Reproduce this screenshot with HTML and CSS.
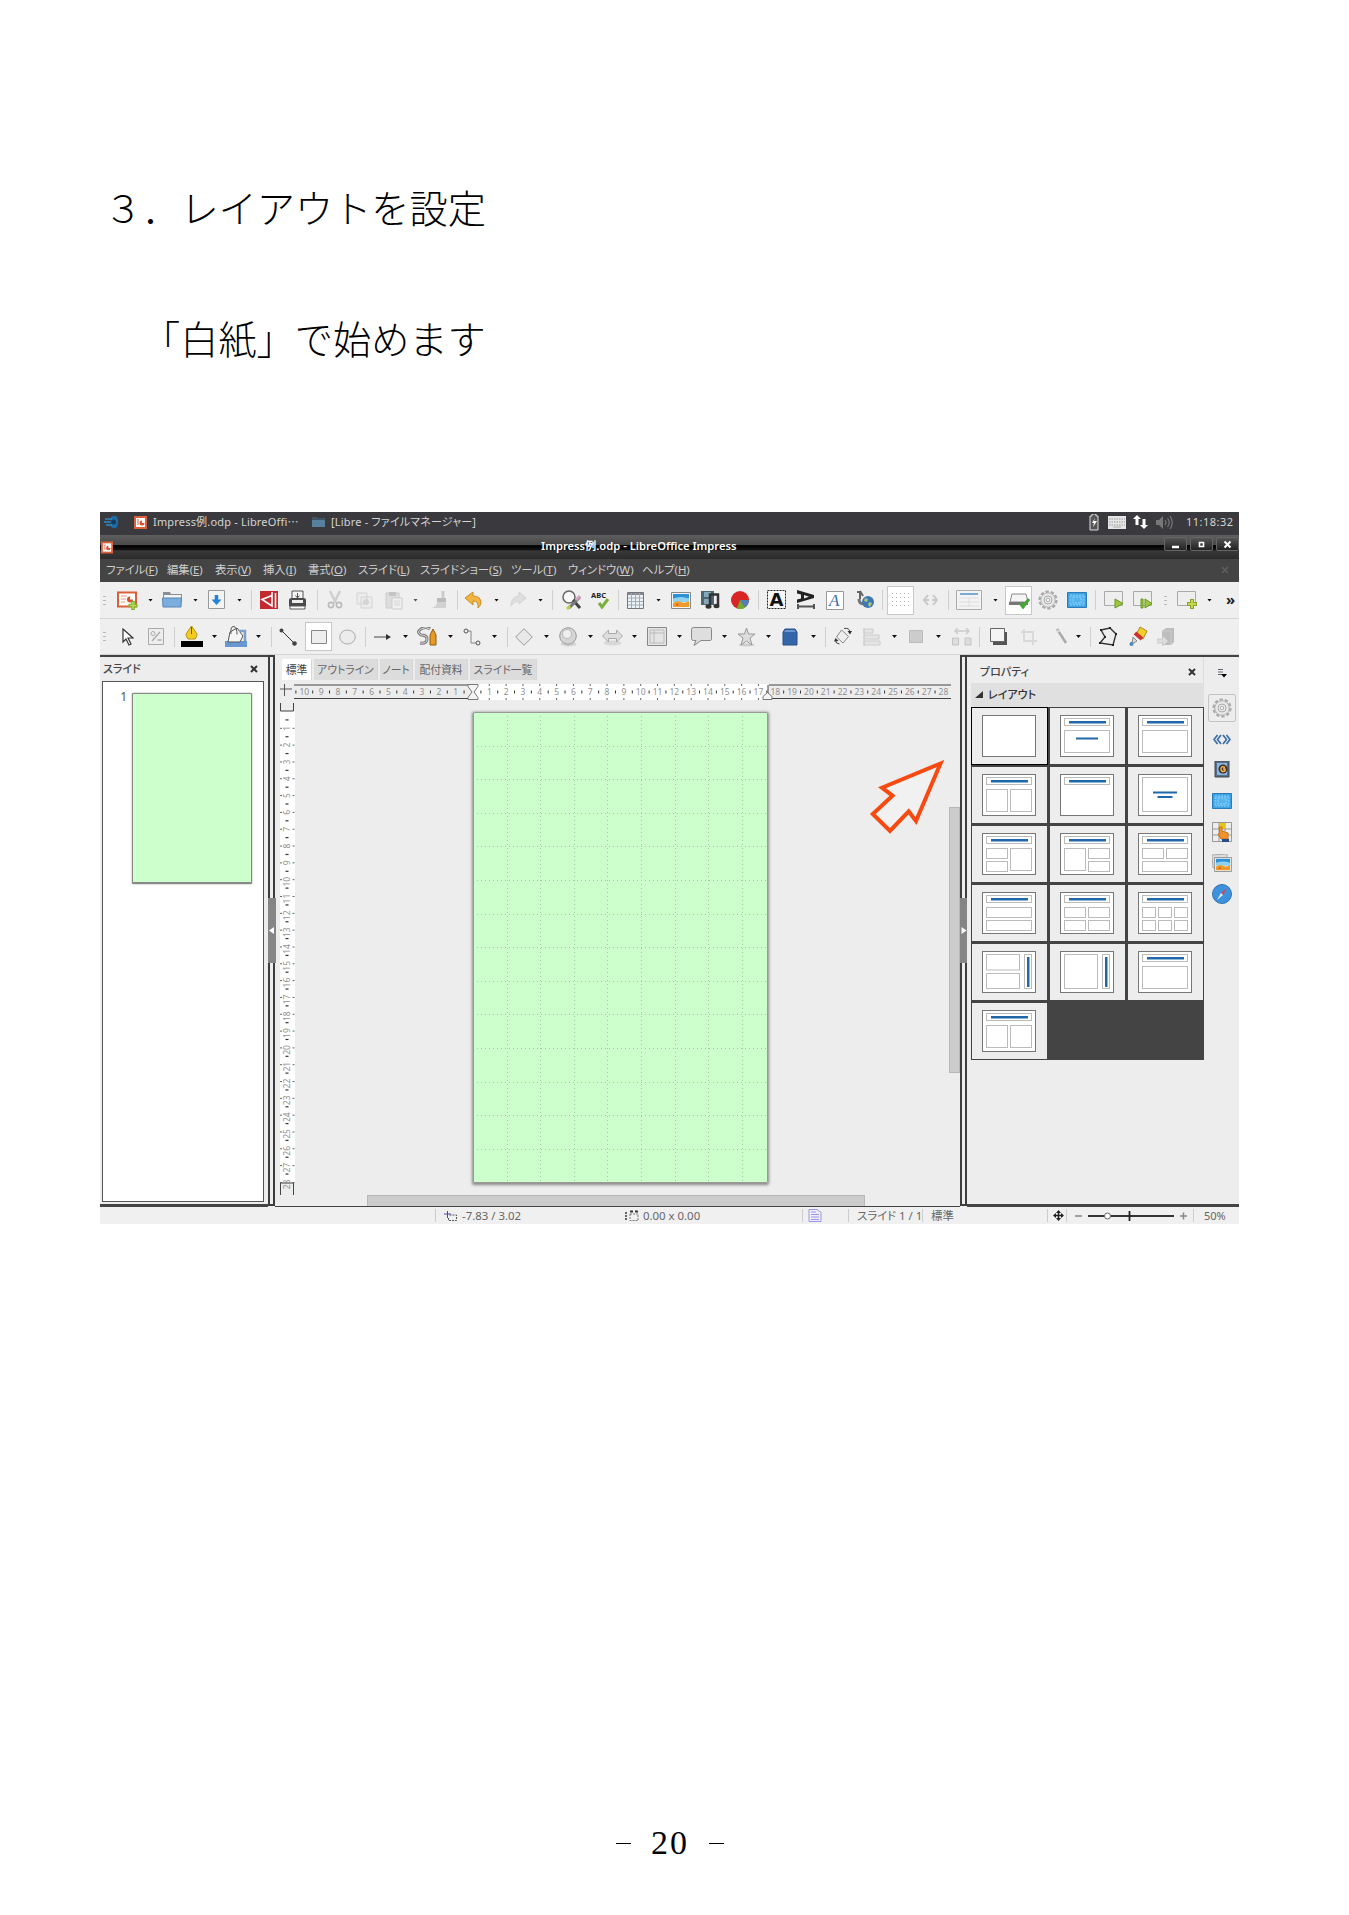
FILE: index.html
```html
<!DOCTYPE html>
<html lang="ja">
<head>
<meta charset="utf-8">
<title>レイアウトを設定</title>
<link rel="stylesheet" href="styles.css">
</head>
<body>
<article class="sheet">
  <h1 class="heading">３．レイアウトを設定</h1>
  <p class="lead">「白紙」で始めます</p>

  <section class="desktop">
    <div class="taskbar">
      <svg class="mouse" width="16" height="14" viewBox="0 0 16 14"><path d="M7 2q7-4 7 5t-7 5z" fill="#1b6da8"/><path d="M1 4h7M0 7h8M2 10h6" stroke="#2a8ccc" stroke-width="1.600"/><circle cx="9.500" cy="7" r="2.500" fill="#123c60"/></svg>
      <span class="task t1"><svg width="13" height="13"><use href="#odp"/></svg>Impress例.odp - LibreOffi⋯</span>
      <span class="task t2"><svg width="13" height="12" viewBox="0 0 13 12"><path d="M0 1h5l1 1h7v9H0z" fill="#3f5566"/><path d="M0 4h13v7H0z" fill="#577f9e"/></svg>[Libre - ファイルマネージャー]</span>
      <span class="tray">
        <svg width="10" height="17" viewBox="0 0 10 17"><path d="M3 0h4v2h2v14H1V2h2z" fill="#555" stroke="#ddd"/><path d="M6 4 3 9h2l-1 4 4-6H5z" fill="#fff"/></svg>
        <svg class="kbd" width="18" height="13" viewBox="0 0 18 13"><path d="M0 0h18v13H0z" fill="#e6e6e6"/><path d="M1 3h16M1 6h16M1 9h16" stroke="#999" stroke-dasharray="1.500 1"/><path d="M5 11h8" stroke="#aaa"/></svg>
        <svg class="net" width="15" height="14" viewBox="0 0 15 14"><path d="M4 0 0 4h2.500v6h3V4H8zM11 14l-4-4h2.500V4h3v6H15z" fill="#fff"/></svg>
        <svg class="vol" width="17" height="13" viewBox="0 0 17 13"><path d="M0 4h3l4-4v13L3 9H0z" fill="#777"/><path d="M9 4q2 2.500 0 5M11.500 2q3.500 4.500 0 9M14 0q4.500 6.500 0 13" fill="none" stroke="#777" stroke-width="1.200"/></svg>
        <time>11:18:32</time>
      </span>
    </div>
    <div class="titlebar">
      <svg class="appicon" width="12" height="13"><use href="#odp"/></svg>
      <strong>Impress例.odp - LibreOffice Impress</strong>
      <span class="winbtns">
        <b><svg width="9" height="9"><path d="M1 7h7" stroke="#fff" stroke-width="2.500"/></svg></b>
        <b><svg width="9" height="9"><path d="M2.500 2.500h4v4h-4z" fill="none" stroke="#fff" stroke-width="1.600"/></svg></b>
        <b><svg width="9" height="9"><path d="M1.500 1.500 7.500 7.500M7.500 1.500 1.500 7.500" stroke="#fff" stroke-width="2"/></svg></b>
      </span>
    </div>
    <nav class="menubar">
      <span>ファイル(<u>F</u>)</span><span>編集(<u>E</u>)</span><span>表示(<u>V</u>)</span><span>挿入(<u>I</u>)</span><span>書式(<u>O</u>)</span><span>スライド(<u>L</u>)</span><span>スライドショー(<u>S</u>)</span><span>ツール(<u>T</u>)</span><span>ウィンドウ(<u>W</u>)</span><span>ヘルプ(<u>H</u>)</span><svg width="8" height="8"><path d="M1 1l6 6M7 1 1 7" stroke="#606060" stroke-width="1.500"/></svg>
    </nav>

    <div class="toolbar standard">
      <i class="grip"></i>
      <svg width="22" height="20"><path d="M1 2.500h18v14H1z" fill="#fff" stroke="#d9603b" stroke-width="2"/><path d="M4 6h6M4 9h5M4 12h4" stroke="#e79a80"/><circle cx="13" cy="9.500" r="3" fill="#d9502b"/><path d="M13 9.500V6.500h3v3z" fill="#fff"/><path d="M16 11v9M11.500 15.500h9" stroke="#7cae25" stroke-width="3.500"/><path d="M16 12v7M12.500 15.500h7" stroke="#b7d957" stroke-width="1.500"/></svg>
      <i class="dd"></i>
      <svg width="21" height="18"><path d="M1 1h7l1 2h11v7H1z" fill="#8a8f93"/><path d="M2 4h17v4H2z" fill="#f3f3f3"/><path d="M.5 7h19l-.5 9H1z" fill="#79aede" stroke="#5b87b0"/></svg>
      <i class="dd"></i>
      <svg width="17" height="20"><path d="M.5.500h16v18H.5z" fill="#f4f4f4" stroke="#999"/><path d="M8.500 5v6" stroke="#2482d8" stroke-width="3.500"/><path d="M3.500 9.500h10l-5 5.500z" fill="#2482d8"/></svg>
      <i class="dd"></i>
      <i class="sep"></i>
      <svg width="19" height="18"><path d="M0 0h18v18H0z" fill="#c22a30"/><path d="M12 1v14L2 8.500 12 4.500M15.500 2v15" fill="none" stroke="#fff" stroke-width="1.600"/></svg>
      <svg width="20" height="20"><path d="M4 1h11v9H4z" fill="#f5f5f5" stroke="#555"/><path d="M9.500 3v5M7.500 5.500l2 2.500 2-2.500" stroke="#555" fill="none"/><path d="M1 10q0-2 3-2h11q3 0 3 2v6H1z" fill="#4a4a4a"/><path d="M4 10h11v3H4z" fill="#eee"/><path d="M2 16h15v3H2z" fill="#fff" stroke="#555"/></svg>
      <i class="sep"></i>
      <svg width="16" height="20"><path d="M3 1l6 12M13 1 7 13" stroke="#cfcfcf" stroke-width="2.500"/><circle cx="4" cy="15" r="2.600" fill="none" stroke="#bbb" stroke-width="1.600"/><circle cx="12" cy="15" r="2.600" fill="none" stroke="#bbb" stroke-width="1.600"/></svg>
      <svg width="17" height="17"><path d="M1 1h10v11H1zM5 5h11v11H5z" fill="#ececec" stroke="#d4d4d4"/><circle cx="10" cy="10" r="3" fill="#d4d4d4"/></svg>
      <svg width="19" height="19"><path d="M2 2h13v15H2z" fill="#ddd" stroke="#ccc"/><path d="M5 1h7v4H5z" fill="#c4c4c4"/><path d="M8 7h10v11H8z" fill="#f0f0f0" stroke="#ccc"/><path d="M10 10h6M10 12h6M10 14h6" stroke="#d5d5d5"/></svg>
      <i class="dd g"></i>
      <svg width="19" height="20"><path d="M14 1v8" stroke="#ccc" stroke-width="3"/><path d="M8 8h9v4H8z" fill="#bbb"/><path d="M8 12h9v6H2q6-1 6-6z" fill="#d2d2d2"/></svg>
      <i class="sep"></i>
      <svg width="17" height="18"><path d="M0 7 8 1v4q8 0 8 7 0 2-3 5 1-7-5-7v4z" fill="#f0b440" stroke="#c98f28"/></svg>
      <i class="dd"></i>
      <svg width="17" height="18"><path d="M16 7 9 1v4Q1 6 1 15q3-5 8-5v3z" fill="#dedede" stroke="#d2d2d2"/></svg>
      <i class="dd"></i>
      <i class="sep"></i>
      <svg width="20" height="20"><circle cx="7" cy="7" r="6" fill="#f8f8f8" stroke="#666" stroke-width="1.500"/><path d="M11 10l7 8" stroke="#444" stroke-width="3"/><path d="M18 7 7 18" stroke="#777" stroke-width="3"/><path d="M14 10l4-4" stroke="#d5a2c4" stroke-width="3"/><path d="M5 19l3-3" stroke="#bad04a" stroke-width="3"/></svg>
      <svg width="19" height="20"><text x="0" y="8" class="abc">ABC</text><path d="M8 13l3 4 6-8" fill="none" stroke="#7cae3a" stroke-width="3"/></svg>
      <i class="sep"></i>
      <svg width="17" height="17"><path d="M.5.500h16v16H.5z" fill="#edf2f4" stroke="#777"/><path d="M1 2h15" stroke="#889" stroke-width="2"/><path d="M1 6h15M1 9.500h15M1 13h15M4.500 1v15M8.500 1v15M12.500 1v15" stroke="#9eaeb8"/></svg>
      <i class="dd"></i>
      <svg width="20" height="17"><use href="#photo"/></svg>
      <svg width="21" height="20"><path d="M1 1h13v14H1z" fill="#4d6673"/><path d="M4 2h7v5H4zM4 9h7v5H4z" fill="#87a8b8"/><path d="M10 15V4.500h8V15" stroke="#333" stroke-width="2.500" fill="none"/><ellipse cx="8.500" cy="16.500" rx="3" ry="2.200" fill="#333"/><ellipse cx="16.500" cy="16" rx="3" ry="2.200" fill="#333"/></svg>
      <svg width="18" height="18"><circle cx="9" cy="9" r="9" fill="#da2525"/><path d="M9 9h9a9 9 0 0 1-4 7.500z" fill="#4f82b8"/><path d="M9 9l5 7.500q-4 3-8 1z" fill="#70ae32"/></svg>
      <i class="sep"></i>
      <svg width="20" height="20"><path d="M.5.500h18v18H.5z" fill="#f7f7f7" stroke="#222" stroke-dasharray="2 1"/><text x="2.500" y="15.500" class="bigA">A</text></svg>
      <svg width="20" height="20"><path d="M1 0l17 5v3L1 13V9.500l4-1v-4L1 3.500zM8 5v3.500l5-1.800z" fill="#222" fill-rule="evenodd"/><path d="M1 16.500h18M2 14v5M18 14v5" stroke="#555" stroke-width="2"/></svg>
      <svg width="18" height="19"><path d="M.5.500h17v18H.5z" fill="#fff" stroke="#999"/><text x="3" y="15" class="fontA">A</text></svg>
      <svg width="18" height="20"><path d="M1 2h3v7M4 1l3 5" stroke="#666" stroke-width="2" fill="none"/><path d="M3 9q0 5 5 5" stroke="#777" stroke-width="3" fill="none"/><circle cx="12" cy="12" r="6" fill="#3f77b5"/><path d="M9 8l3 1-1 3-3-1zM13 12l3 1-2 4-2-2z" fill="#a5c978"/></svg>
      <i class="sep"></i>
      <span class="pressed"><svg width="19" height="17"><path d="M1 1.500h18M1 5.500h18M1 9.500h18M1 13.500h18" stroke="#aaa" stroke-dasharray="1 3"/></svg></span>
      <svg width="17" height="12"><path d="M6 1 2 6l4 5M11 1l4 5-4 5M3 6h4M10 6h4" fill="none" stroke="#c8c8c8" stroke-width="2"/></svg>
      <i class="sep"></i>
      <svg width="26" height="20"><path d="M.5.500h25v19H.5z" fill="#f3f3f3" stroke="#aaa"/><path d="M4 4h18" stroke="#7aabd7" stroke-width="2"/><path d="M3 8h20M3 12h20M3 16h20M13 8v9" stroke="#ddd"/></svg>
      <i class="dd"></i>
      <span class="pressed"><svg width="22" height="17"><path d="M4 2h14l2 8H2z" fill="#f5f5f5" stroke="#888"/><path d="M1 10h19v3H1z" fill="#777"/><path d="M12 11l3 4 6-8" stroke="#43a83a" stroke-width="3" fill="none"/></svg></span>
      <svg width="20" height="20"><use href="#gear"/></svg>
      <svg width="20" height="16"><use href="#master"/></svg>
      <i class="sep"></i>
      <svg width="21" height="18"><path d="M.5.500h18v14H.5z" fill="#eee" stroke="#aaa"/><path d="M11 8v9l8-4.500z" fill="#9cc83c" stroke="#6a9620"/></svg>
      <svg width="21" height="18"><path d="M.5.500h18v14H.5z" fill="#eee" stroke="#aaa"/><path d="M8 8h2v9H8zM12 8v9l7-4.500z" fill="#9cc83c" stroke="#6a9620"/></svg>
      <i class="grip"></i>
      <svg width="21" height="18"><path d="M.5.500h18v14H.5z" fill="#eee" stroke="#aaa"/><path d="M15 8v10M10 13h10" stroke="#8ba232" stroke-width="4"/><path d="M15 9v8M11 13h8" stroke="#c5d84c" stroke-width="2"/></svg>
      <i class="dd"></i>
      <b class="more">»</b>
    </div>

    <div class="toolbar drawing">
      <i class="grip"></i>
      <svg width="12" height="18"><path d="M1 1v13l3-3 3 6 2-1-3-6h5z" fill="#fff" stroke="#333" stroke-width="1.200"/></svg>
      <svg width="16" height="17"><path d="M.5.500h15v16H.5z" fill="#eee" stroke="#aaa"/><path d="M4 13l8-9M9.500 12h4" fill="none" stroke="#aaa" stroke-width="1.300"/><circle cx="5" cy="5.500" r="2" fill="none" stroke="#aaa"/></svg>
      <i class="sep"></i>
      <svg class="tall" width="22" height="21"><path d="M10.500 0 16 8q0 3-2 5H7q-2-2-2-5z" fill="#f2cc20" stroke="#b8930f"/><path d="M10.500 1v7" stroke="#555"/><path d="M0 15h22v6H0z" fill="#000"/></svg>
      <i class="dd"></i>
      <svg class="tall" width="22" height="21"><path d="M0 15h22v6H0z" fill="#6898d4"/><path d="M5 6l7-4 6 8-3 6H3z" fill="#f5f5f5" stroke="#555"/><path d="M6 8q-1-8 3-7.500 3 1 3 8" fill="none" stroke="#555"/><path d="M14 5h6v10" fill="none" stroke="#7da0cb" stroke-width="2.500"/></svg>
      <i class="dd"></i>
      <i class="sep"></i>
      <svg width="18" height="18"><path d="M2 2l14 14" stroke="#333"/><circle cx="2.500" cy="2.500" r="2" fill="#444"/><circle cx="15.500" cy="15.500" r="2.300" fill="#444"/></svg>
      <span class="pressed"><svg width="16" height="14"><path d="M.5.500h15v13H.5z" fill="#eee" stroke="#888"/></svg></span>
      <svg width="17" height="17"><ellipse cx="8.500" cy="9" rx="7.800" ry="7" fill="#ececec" stroke="#aaa"/></svg>
      <i class="sep"></i>
      <svg width="18" height="8"><path d="M0 4h14" stroke="#444"/><path d="M12 1l5 3-5 3z" fill="#333"/></svg>
      <i class="dd"></i>
      <svg width="21" height="20"><path d="M13 2Q9-1 4 2t0 6q6 0 6 4 0 5-7 4" fill="none" stroke="#777" stroke-width="3"/><path d="M13 2Q9-1 4 2t0 6q6 0 6 4 0 5-7 4" fill="none" stroke="#ddd"/><path d="M13 18V8l3-6 3 6v10z" fill="#e79a24" stroke="#8d5d15"/></svg>
      <i class="dd"></i>
      <svg width="18" height="18"><path d="M5 3h3v12h5" fill="none" stroke="#888"/><circle cx="3" cy="3" r="2" fill="#eee" stroke="#555"/><circle cx="15" cy="15" r="2" fill="#eee" stroke="#555"/></svg>
      <i class="dd"></i>
      <i class="sep"></i>
      <svg width="18" height="18"><path d="M9 .7 17.300 9 9 17.300.7 9z" fill="#e8e8e8" stroke="#999"/></svg>
      <i class="dd"></i>
      <svg width="19" height="20"><ellipse cx="9.500" cy="17" rx="8" ry="2.500" fill="#d5d5d5"/><circle cx="9" cy="9" r="8.300" fill="#d4d4d4" stroke="#999"/><circle cx="8" cy="7" r="4.500" fill="#eee" stroke="#bbb"/></svg>
      <i class="dd"></i>
      <svg width="21" height="18"><ellipse cx="10.500" cy="15" rx="9" ry="2.500" fill="#d8d8d8"/><path d="M.5 8 6.500 2v3.500h8V2l6 6-6 6v-3.500h-8V14z" fill="#ddd" stroke="#aaa"/></svg>
      <i class="dd"></i>
      <svg width="20" height="19"><path d="M.5.500h19v18H.5z" fill="#e4e4e4" stroke="#888"/><path d="M3 3h14v13H3zM3 6h14M7 3v13" fill="none" stroke="#bbb"/></svg>
      <i class="dd"></i>
      <svg width="21" height="19"><path d="M2.500.500h17q1 0 1 2v9q0 2-1 2H10l-7 5 2-5H2.500q-2 0-2-2v-9q0-2 2-2z" fill="#dedede" stroke="#888"/></svg>
      <i class="dd"></i>
      <svg width="19" height="20"><ellipse cx="9.500" cy="18" rx="8" ry="1.500" fill="#ccc"/><path d="M9.500 1l2 6h6.500l-5 4 2 7-5.500-4L4 18l2-7-5-4h6.500z" fill="#ddd" stroke="#999"/></svg>
      <i class="dd"></i>
      <svg width="16" height="18"><path d="M1 4l2-3h10l2 3v13H1z" fill="#3465a8" stroke="#284f8c"/><path d="M2 4l2-2h8l2 2z" fill="#6d96cf"/></svg>
      <i class="dd"></i>
      <i class="sep"></i>
      <svg width="18" height="19"><path d="M7.500 3l7 6.500L9 16 2.500 10z" fill="#eee" stroke="#888"/><path d="M10 1.500q5-1 6 3M1.500 13q0 4 4 4" fill="none" stroke="#444"/><path d="M13.500 4h4.500l-2 3.500zM0 14.500l1.500-3.500 3 3z" fill="#333"/></svg>
      <svg width="18" height="18"><path d="M1 0v18M1 1h9v4H1zM1 7h15v4H1zM1 13h16v4H1z" fill="#e5e5e5" stroke="#ccc"/></svg>
      <i class="dd"></i>
      <svg width="14" height="13"><path d="M.5.500h13v12H.5z" fill="#ccc" stroke="#bcbcbc"/></svg>
      <i class="dd"></i>
      <svg width="20" height="18"><path d="M3 3h14M6 0 3 3l3 3M14 0l3 3-3 3" fill="none" stroke="#ccc" stroke-width="1.500"/><path d="M.5 10h6v7h-6zM13 10h6v7h-6z" fill="#ddd" stroke="#c4c4c4"/></svg>
      <i class="sep"></i>
      <svg width="18" height="17"><path d="M3 4h14v13H3z" fill="#555"/><path d="M.5.500h14v13H.5z" fill="#f4f4f4" stroke="#666"/></svg>
      <svg width="16" height="16"><path d="M3 0v12h13M0 3h12v13" fill="none" stroke="#d8d8d8" stroke-width="1.800"/></svg>
      <svg width="12" height="18"><path d="M1 1l9 14" stroke="#aaa" stroke-width="2.500"/><path d="M1 4l3-2" stroke="#ddd" stroke-width="2"/></svg>
      <i class="dd"></i>
      <i class="sep"></i>
      <svg width="19" height="20"><path d="M3 3l9-2 6 6-3 11-13-2 5-6z" fill="none" stroke="#333" stroke-width="1.400"/><path d="M2 2h2v2H2zM11 0h2v2h-2zM17 6h2v2h-2zM14 17h2v2h-2zM1 15h2v2H1zM6 9h2v2H6z" fill="#222"/></svg>
      <svg width="19" height="21"><path d="M11 1l7 4-4 8-7-4z" fill="#f0cf29" stroke="#af8d1a"/><path d="M6 7l7 6" stroke="#d23030" stroke-width="4"/><path d="M4 11l4 4-5 3z" fill="#d8d8d8" stroke="#888"/><circle cx="2.500" cy="18" r="2" fill="#4a87bd"/></svg>
      <svg width="18" height="18"><path d="M5 3l4-3h8v14l-3 3H5z" fill="#bdbdbd"/><path d="M5 3h9v14" fill="none" stroke="#ccc"/><path d="M0 11h6V8l5 5-5 5v-3H0z" fill="#ddd" stroke="#ccc"/></svg>
    </div>

    <div class="workspace">
      <aside class="slides">
        <header>スライド<svg width="8" height="8"><use href="#x"/></svg></header>
        <div class="list"><span class="num">1</span><div class="thumb"></div></div>
      </aside>
      <div class="splitter left"><svg width="8" height="65"><path d="M0 0h8v65H0z" fill="#858585"/><path d="M6 29v7l-5-3.500z" fill="#fff"/></svg></div>
      <main class="editor">
        <div class="tabs"><span class="on">標準</span><span>アウトライン</span><span>ノート</span><span>配付資料</span><span>スライド一覧</span></div>
        <svg id="hruler" class="hruler" width="673" height="18"></svg>
        <div class="canvas">
          <svg id="vruler" class="vruler" width="18" height="496"></svg>
          <div class="stage">
            <svg id="page" class="page" width="295" height="471"></svg>
            <svg class="pointer" width="80" height="80" viewBox="867 757 80 80"><path d="M940.500 763.500 882 787.700l10.500 8-19.700 18.300 17.200 17 18.700-19.700 7.300 9.800z" fill="#fbfbfb" fill-opacity=".3" stroke="#f84a10" stroke-width="4"/></svg>
          </div>
          <div class="vscroll"></div>
        </div>
        <div class="hscroll"></div>
      </main>
      <div class="splitter right"><svg width="7" height="65"><path d="M0 0h7v65H0z" fill="#858585"/><path d="M1.500 29v7l5-3.500z" fill="#fff"/></svg></div>
      <aside class="props">
        <header>プロパティ<svg width="8" height="8"><use href="#x"/></svg></header>
        <h2><svg width="8" height="8"><path d="M8 0v7H0z" fill="#333"/></svg>レイアウト</h2>
        <div id="layouts" class="layouts"></div>
      </aside>
      <nav class="deck">
        <svg width="10" height="10"><path d="M1 1.500h5M1 4h5M1 6.500h4" stroke="#667"/><path d="M4 6h6L7 9.500z" fill="#000"/></svg>
        <span class="sel"><svg width="20" height="20"><use href="#gear"/></svg></span>
        <svg width="18" height="11"><path d="M4.500 1 1 5.500l3.500 4.500M8 1 4.500 5.500 8 10M10 1l3.500 4.500L10 10M13.500 1 17 5.500 13.500 10" fill="none" stroke="#3c6ea8" stroke-width="1.700"/></svg>
        <svg width="16" height="17"><path d="M1 0h14v16H1z" fill="#55708b" stroke="#444"/><path d="M3 2h10v12H3z" fill="#8cb4df"/><circle cx="9" cy="8" r="4.500" fill="#402c20"/><path d="M11 6.500Q7 4.500 7 8t4 2V8H9" fill="none" stroke="#f3bd55" stroke-width="1.400"/></svg>
        <svg width="20" height="16"><use href="#master"/></svg>
        <svg width="20" height="20"><path d="M.5.500h19v19H.5zM.5 7h19M.5 13h19M7 0v20M13 0v20" fill="#eee" stroke="#999"/><path d="M7 1h6v6H7z" fill="#e5c512"/><path d="M7 5h3v4l6 2v6H9l-3-5h2z" fill="#f1932b" stroke="#c87418"/><path d="M10 17h7v3h-7z" fill="#284c85"/></svg>
        <svg width="20" height="18" viewBox="0 0 20 18"><path d="M0 1l15-1v12L1 14z" fill="#ddd" stroke="#aaa"/><use href="#photo" x="2" y="3" width="18" height="15"/></svg>
        <svg width="20" height="20"><circle cx="10" cy="10" r="9.500" fill="#3d92dd" stroke="#3172ae"/><path d="M15 4l-4 7-2-2z" fill="#d84343"/><path d="M5 16l4-7 2 2z" fill="#e8e8e8"/></svg>
      </nav>
    </div>

    <footer class="status">
      <span class="s1"><svg width="13" height="10"><path d="M0 3h7M3.500 0v7" stroke="#44b"/><path d="M5.500 4h7v5.500h-8V6" fill="none" stroke="#555" stroke-dasharray="2 1"/></svg>-7.83 / 3.02</span>
      <span class="s2"><svg width="14" height="11"><path d="M1 2v8" stroke="#333" stroke-width="1.500" stroke-dasharray="2 1"/><path d="M5 1.500h8" stroke="#333" stroke-width="2" stroke-dasharray="3 2"/><path d="M5 4h8v6.500H5z" fill="none" stroke="#777" stroke-dasharray="2 1"/></svg>0.00 x 0.00</span>
      <span class="s3"><svg width="14" height="13"><path d="M1 .5h8l4 3v9H1z" fill="#eeeeff" stroke="#9a97dc"/><path d="M3 3h5M3 5.500h8M3 8h8M3 10.500h8" stroke="#9a97dc"/></svg></span>
      <span class="s4">スライド 1 / 1</span>
      <span class="s5">標準</span>
      <span class="s6"><svg width="11" height="11"><path d="M5.500 1v9M1 5.500h9" stroke="#222" stroke-width="1.500"/><path d="M5.500 0 8 3H3zM5.500 11 8 8H3zM0 5.500 3 3v5zM11 5.500 8 3v5z" fill="#222"/></svg></span>
      <span class="s7"><svg width="112" height="12"><path d="M0 6h7M105 6h7M108.500 2.500v7" stroke="#888" stroke-width="1.500"/><path d="M13 6h86" stroke="#333" stroke-width="1.800"/><path d="M54.500 1v10" stroke="#222" stroke-width="1.800"/><circle cx="32.500" cy="6" r="3" fill="#fff" stroke="#666"/></svg></span>
      <span class="s8">50%</span>
    </footer>
  </section>

  <p class="folio"><i></i>20<i></i></p>
</article>

<svg class="defs" width="0" height="0">
  <symbol id="odp" viewBox="0 0 13 13"><path d="M0 0h13v13H0z" fill="#d9603b"/><path d="M2 2h9v9H2z" fill="#fff"/><path d="M3 4h2M3 6h2M3 8h2" stroke="#d9603b"/><circle cx="8" cy="7" r="2.500" fill="#d9502b"/><path d="M8 7V4h3v3z" fill="#fff"/></symbol>
  <symbol id="x" viewBox="0 0 8 8"><path d="M1 1l6 6M7 1 1 7" stroke="#333" stroke-width="2"/></symbol>
  <symbol id="photo" viewBox="0 0 20 17"><path d="M.5.500h19v16H.5z" fill="#f5f5f5" stroke="#888"/><path d="M2 2h16v7H2z" fill="#2b92d8"/><path d="M2 6.500q8-3 16 0V10H2z" fill="#8fd2f0"/><path d="M2 11q4-3 8-1t8-1v6H2z" fill="#f09a2c"/><path d="M5 14l1-3 2 2z" fill="#d05a20"/></symbol>
  <symbol id="gear" viewBox="0 0 20 20"><circle cx="10" cy="10" r="8.300" fill="none" stroke="#aaa" stroke-width="2.600" stroke-dasharray="3.300 1.900"/><circle cx="10" cy="10" r="7.200" fill="#e8e8e8" stroke="#b5b5b5"/><circle cx="10" cy="10" r="4" fill="#eee" stroke="#aaa"/><circle cx="10" cy="10" r="1.800" fill="#f6f6f6" stroke="#aaa"/></symbol>
  <symbol id="master" viewBox="0 0 20 16"><path d="M.5.500h19v15H.5z" fill="#3da2e4" stroke="#2b7cb8"/><path d="M3 3h14v10H3zM6 5h8v6H6z" fill="#55b4ee" stroke="#8bd0f6" stroke-dasharray="2 1"/></symbol>
</svg>
<script src="app.js"></script>
</body>
</html>
```
FILE: styles.css
```css
* { box-sizing: border-box; }
body { margin: 0; background: #fff; }
svg { display: block; flex: none; }
.defs { position: absolute; }
.sheet { width: 1349px; height: 1915px; padding: 179px 0 0 100px; display: flex; flex-direction: column; align-items: flex-start; overflow: hidden; }
.heading, .lead { margin: 0; font: 300 38.2px/56px "Noto Sans CJK JP", sans-serif; color: #000; padding-left: 4px; white-space: nowrap; }
.lead { margin-top: 75px; padding-left: 42px; }
.desktop { margin-top: 146px; width: 1139px; height: 712px; background: #ededed; font: 11px/14px "Noto Sans", "Noto Sans CJK JP", sans-serif; color: #555; font-feature-settings: "palt"; display: flex; flex-direction: column; flex: none; }

.taskbar { height: 23px; background: #3a3a3e; color: #d4d4d4; display: flex; align-items: center; padding: 0 3px 3px 4px; font-size: 11px; white-space: nowrap; }
.task { display: flex; align-items: center; gap: 6px; }
.t1 { margin-left: 14px; width: 178px; letter-spacing: .18px; }
.t2 { letter-spacing: .18px; }
.tray { margin-left: auto; display: flex; align-items: center; }
.kbd { margin-left: 9px; }
.net { margin-left: 7px; }
.vol { margin-left: 8px; }
.tray time { margin-left: 13px; width: 50px; letter-spacing: .5px; }
.titlebar { height: 24px; background: linear-gradient(#5e5e5e, #484848 42%, #000 44%, #141414 62%, #383838 66%, #2c2c2c); display: flex; align-items: center; color: #fff; }
.appicon { margin-left: 1px; }
.titlebar strong { margin: -2px 0 0 428px; font-size: 11.200px; font-weight: 600; white-space: nowrap; }
.winbtns { margin-left: auto; display: flex; gap: 3px; align-self: flex-start; padding: 2px 0 0; }
.winbtns b { width: 23px; height: 14px; border: 1px solid #666; border-radius: 2px; background: linear-gradient(#555, #222); display: flex; align-items: center; justify-content: center; }
.menubar { height: 23px; background: #444; color: #cfcfcf; display: grid; grid-template-columns: 61px 48px 48px 45px 50px 62px 91px 57px 74px 1fr 8px; align-items: center; padding: 0 10px 1px 6px; font-size: 11.400px; white-space: nowrap; letter-spacing: -.05px; }

.toolbar { display: grid; align-items: center; justify-items: start; padding-left: 3px; border-bottom: 1px solid #d4d4d4; background: #efefef; }
.standard { height: 37px; grid-template-columns: 14px 31px 14px 31px 15px 29px 14px 9px 28px 29px 10px 29px 28px 29px 16px 28px 8px 29px 16px 28px 14px 10px 29px 27px 9px 29px 15px 29px 31px 27px 9px 29px 30px 30px 26px 5px 35px 26px 8px 37px 12px 33px 29px 28px 9px 29px 31px 13px 30px 19px 13px; }
.drawing { height: 36px; grid-template-columns: 19px 26px 26px 7px 31px 13px 31px 15px 8px 26px 34px 26px 9px 29px 14px 31px 15px 29px 15px 8px 29px 15px 29px 14px 30px 15px 30px 14px 31px 15px 29px 16px 29px 14px 9px 29px 29px 17px 27px 16px 27px 11px 31px 35px 20px 14px 8px 31px 28px 20px; }
.grip { width: 3px; height: 9px; background: repeating-linear-gradient(#bbb 0 1px, transparent 1px 4px); }
.sep { width: 1px; height: 20px; background: #cfcfcf; }
.dd { width: 5px; height: 3px; background: #111; clip-path: polygon(0 0, 100% 0, 50% 100%); }
.dd.g { background: #555; }
.pressed { width: 27px; height: 29px; border: 1px solid #c8c8c8; background: #fff; display: flex; align-items: center; justify-content: center; }
.more { font-size: 15px; color: #222; line-height: 14px; margin-top: -3px; }
.abc { font: bold 7.500px "Noto Sans", sans-serif; fill: #222; }
.bigA { font: bold 18px "DejaVu Sans", sans-serif; fill: #111; }
.fontA { font: italic 17px "Liberation Serif", serif; fill: #3b6fae; }

.workspace { height: 552px; display: flex; }
.slides { width: 168px; border-top: 2px solid #444; border-bottom: 3px solid #444; padding: 0 4px 2px 2px; display: flex; flex-direction: column; }
.slides header { height: 24px; display: flex; justify-content: space-between; align-items: center; padding: 0 6px 0 1px; color: #444; font-weight: 500; }
.list { flex: 1; width: 162px; border: 1px solid #555; background: #fff; display: flex; align-items: flex-start; padding-top: 11px; }
.num { width: 24px; text-align: right; font-size: 12px; line-height: 7px; }
.thumb { margin-left: 5px; width: 120px; height: 191px; background: #cfc; border: 1px solid #888; border-bottom-width: 2px; border-radius: 1px; box-shadow: 0 0 2px #999; }
.splitter { border: 2px solid #3d3d3d; background: #ededed; flex: none; position: relative; width: 7px; height: 551px; }
.splitter svg { position: absolute; top: 241px; left: -2px; }
.editor { width: 685px; border-bottom: 1px solid #444; padding-left: 4px; display: flex; flex-direction: column; }
.tabs { display: flex; height: 29px; padding: 4px 0 0 3px; align-items: flex-start; gap: 2px; white-space: nowrap; font-size: 10.800px; }
.tabs span { height: 21px; padding-top: 4px; background: #dcdcdc; text-align: center; color: #666; border-right: 1px solid #d6d6d6; }
.tabs .on { background: #fff; color: #444; }
.tabs span:nth-child(1) { width: 30px; }
.tabs span:nth-child(2) { width: 64px; }
.tabs span:nth-child(3) { width: 33px; }
.tabs span:nth-child(4) { width: 53px; }
.tabs span:nth-child(5) { width: 67px; }
.hruler { margin-left: 1px; }
.canvas { height: 493px; display: flex; }
.stage { flex: 1; position: relative; }
.page { position: absolute; left: 176px; top: 10px; box-shadow: 0 1px 3px 1px #888; border-radius: 1px; }
.pointer { position: absolute; left: 570px; top: 55px; }
.vscroll { width: 11px; height: 266px; margin-top: 105px; background: #ccc; border: 1px solid #b8b8b8; }
.hscroll { width: 498px; height: 11px; margin-left: 88px; background: #ccc; border: 1px solid #b8b8b8; border-bottom: 0; }
.ticks { fill: #909090; font: 8.500px "Noto Sans", sans-serif; text-anchor: middle; }
.props { width: 237px; border-top: 2px solid #444; border-bottom: 3px solid #444; padding: 0 0 0 4px; }
.props header { height: 26px; padding: 3px 7px 0 9px; display: flex; justify-content: space-between; align-items: center; color: #444; font-weight: 500; border-right: 1px solid #ddd; }
.props h2 { margin: 0; height: 24px; font: inherit; font-weight: 500; color: #333; background: #e0e0e0; display: flex; align-items: center; gap: 5px; padding-left: 4px; }
.layouts { height: 353px; background: #444; display: grid; grid-template-columns: repeat(3, 1fr); grid-template-rows: repeat(6, 1fr); gap: 3px; padding: 1px; }
.cell { background: #ededed; padding: 7px 0 0 10px; }
.cell.current { outline: 1px solid #000; }
.frame { fill: #fff; stroke: #777; }
.box { fill: #fff; stroke: #bbb; }
.ink { fill: #2068a8; }
.deck { width: 35px; border-top: 2px solid #444; border-bottom: 3px solid #444; display: flex; flex-direction: column; align-items: center; padding-top: 11px; }
.sel { width: 28px; height: 28px; margin: 16px 0 12px; border: 1px solid #c4c4c4; border-radius: 2px; display: flex; align-items: center; justify-content: center; }
.deck svg:nth-child(4) { margin-top: 16px; }
.deck svg:nth-child(5) { margin-top: 15px; }
.deck svg:nth-child(6) { margin-top: 13px; }
.deck svg:nth-child(7) { margin-top: 12px; }
.deck svg:nth-child(8) { margin-top: 12px; }

.status { height: 17px; display: grid; grid-template-columns: 190px 177px 46px 74px 125px 19px 127px 1fr; padding-left: 335px; background: #f0f0f0; align-items: center; font-size: 11.400px; color: #666; white-space: nowrap; }
.status span { display: flex; align-items: center; gap: 4px; height: 13px; border-left: 1px solid #ccc; padding-left: 8px; }
.status .s1 { gap: 5px; }
.status .s2 { border-left: 0; padding-left: 0; }
.status .s3, .status .s6 { padding-left: 5px; }
.status .s8 { padding-left: 10px; font-size: 11px; }
.folio { margin: 595px 0 0 516px; font: 34px/48px "Liberation Serif", serif; letter-spacing: 2px; white-space: nowrap; color: #000; display: flex; align-items: center; }
.folio i { width: 15px; height: 1px; background: #000; margin: 0 20px 0 0; }
.folio i:last-child { margin: 0 0 0 20px; }
```
FILE: app.js
```js
const CM = 16.82;
const text = (x, y, s) => `<text x="${x}" y="${y}">${s}</text>`;

// Horizontal ruler: zero sits at the page's left edge
const zeroX = 193;
let h = `<path d="M0 5h12M4.500 0v12" stroke="#555" fill="none"/>
<path d="M${zeroX} 0h295v16H${zeroX}z" fill="#fff"/>
<path d="M14 1h174M14 14.500h174M489 1h182M489 14.500h182M488 1v10" stroke="#444" fill="none"/>`;
for (let n = -10; n <= 28; n++) {
  const x = zeroX + n * CM - .5;
  if (n) h += text(x, 11, Math.abs(n));
  if (n === -10) h += `<path d="M${x - CM / 2} 6.500v3" stroke="#333"/>`;
  if (n < 28) h += `<path d="M${x + CM / 2} 6.500v3" stroke="#333"/>`;
  if (n > 0 && n < 18) h += `<path d="M${x} 0v2M${x} 14v2" stroke="#666"/>`;
}
h += `<path d="M${zeroX - 5} .5h10v2l-4 5.500 4 5.500v2h-10v-2l4-5.500-4-5.500z" fill="#f4f4f4" stroke="#777"/>
<path d="M483 15.500v-3l4.500-4 4.500 4v3z" fill="#f4f4f4" stroke="#777"/>`;
const hr = document.getElementById('hruler');
hr.setAttribute('viewBox', '0 0 673 18');
hr.innerHTML = `<g class="ticks">${h}</g>`;

// Vertical ruler
const zeroY = 9.5;
let v = `<path d="M1 ${zeroY}h15v471H1z" fill="#fff"/><path d="M1.500 1v8h13V1M1.500 493v-12h13v12" fill="none" stroke="#444"/>`;
for (let n = 0; n <= 28; n++) {
  const y = zeroY + n * CM;
  if (n) {
    const c = y + (n > 9 ? 2 : 0);
    v += `<text transform="translate(11 ${c}) rotate(-90)">${n}</text>`;
    v += `<path d="M1 ${y}h2M13.500 ${y}h2" stroke="#666"/>`;
  }
  if (n < 28) v += `<path d="M6.500 ${y + CM / 2}h3" stroke="#333" stroke-width="1.200"/>`;
}
document.getElementById('vruler').innerHTML = `<g class="ticks">${v}</g>`;

// Slide with a 2 cm dotted grid
let g = '<path d="M0 0h295v471H0z" fill="#cfc" stroke="none"/>';
for (let i = 1; i < 9; i++) g += `<path d="M${Math.round(i * 33.6) + .5} 4v465"/>`;
for (let i = 1; i < 14; i++) g += `<path d="M4 ${Math.round(i * 33.6) + .5}h291"/>`;
g += '<path d="M.5.500h294v470H.5z" stroke-dasharray="none" stroke="#999" fill="none"/>';
document.getElementById('page').innerHTML = `<g stroke="#a0caa0" stroke-dasharray="1 3">${g}</g>`;

// Layout previews: b = placeholder outline, k = title bar
const title = [['b', 4.5, 3.5, 45, 7], ['k', 9, 6, 37, 2.5]];
const b = (...r) => ['b', ...r], k = (...r) => ['k', ...r];
const quad = [[4.5, 15.5], [28.5, 15.5], [4.5, 28.5], [28.5, 28.5]];
const half = (i) => b(...quad[i], 21, 10);
const kinds = [
  [],
  [...title, b(4.5, 15.5, 45, 22), k(16, 22.5, 22, 2)],
  [...title, b(4.5, 15.5, 45, 22)],
  [...title, b(4.5, 15.5, 21, 22), b(28.5, 15.5, 21, 22)],
  title,
  [b(4.5, 3.5, 45, 34), k(15, 17.5, 24, 2), k(19.5, 22, 15, 2)],
  [...title, half(0), half(2), b(28.5, 15.5, 21, 22)],
  [...title, b(4.5, 15.5, 21, 22), half(1), half(3)],
  [...title, half(0), half(1), b(4.5, 28.5, 45, 10)],
  [...title, b(4.5, 15.5, 45, 10), b(4.5, 28.5, 45, 10)],
  [...title, half(0), half(1), half(2), half(3)],
  [...title, ...[4.5, 20.5, 36.5].flatMap(x => [b(x, 15.5, 13, 10), b(x, 28.5, 13, 10)])],
  [b(4.5, 3.5, 33, 15.5), b(4.5, 22.5, 33, 15), b(42.5, 3.5, 7, 34), k(45, 6, 2.5, 30)],
  [b(4.5, 3.5, 33, 34), b(42.5, 3.5, 7, 34), k(45, 6, 2.5, 30)],
  [...title, b(4.5, 15.5, 45, 22)],
  [...title, b(4.5, 15.5, 21, 22), b(28.5, 15.5, 21, 22)],
];
document.getElementById('layouts').innerHTML = kinds.map((parts, i) =>
  `<div class="cell${i ? '' : ' current'}"><svg width="55" height="43"><rect class="frame" x=".5" y=".5" width="53" height="41"/>${
    parts.map(([t, x, y, w, hh]) => `<rect class="${t === 'b' ? 'box' : 'ink'}" x="${x}" y="${y}" width="${w}" height="${hh}"/>`).join('')
  }</svg></div>`).join('');
```
